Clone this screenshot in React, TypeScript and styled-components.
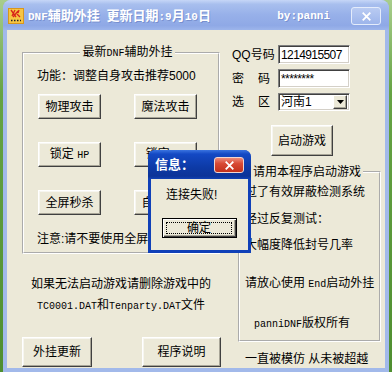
import React from "react"
import styled, { createGlobalStyle } from "styled-components"

const GlobalStyle = createGlobalStyle`
  html, body {
    margin: 0;
    padding: 0;
  }
  body {
    width: 392px;
    height: 372px;
    overflow: hidden;
    background: linear-gradient(180deg, #a8cd8c 0%, #66a344 25%, #4f8e30 100%);
    font-family: "Liberation Sans", "Noto Sans CJK SC", sans-serif;
    font-size: 12px;
    line-height: 14px;
    color: #000;
  }
  * {
    box-sizing: border-box;
  }
`

const Mono = styled.span<{ $size?: number }>`
  font-family: "Liberation Mono", "Noto Sans CJK SC", monospace;
  font-size: ${(p) => p.$size ?? 10}px;
`

const Window = styled.div`
  position: relative;
  margin-left: 3px;
  width: 386px;
  height: 372px;
  display: flex;
  flex-direction: column;
  border-radius: 8px 8px 0 0;
  background: #a2b9ea;
  overflow: hidden;
`

const TitleBar = styled.div`
  height: 30px;
  flex: none;
  display: flex;
  align-items: center;
  padding: 2px 8px 0 5px;
  background: linear-gradient(180deg, #c6d6f7 0%, #a8bfee 14%, #97b0e9 50%, #8fa9e6 85%, #9db5eb 100%);
  color: #fff;
  font-weight: bold;
  font-size: 13px;
  text-shadow: 1px 1px 0 rgba(70, 90, 160, 0.35);
`

const TitleText = styled.span`
  flex: 1;
  margin-left: 4px;
  white-space: nowrap;
`

const Signature = styled.span`
  margin-right: 21px;
  font-family: "Liberation Mono", monospace;
  font-size: 11px;
`

const TitleClose = styled.div`
  width: 30px;
  height: 18px;
  display: flex;
  align-items: center;
  justify-content: center;
  border: 1px solid #e4ecfb;
  border-radius: 3px;
  background: linear-gradient(180deg, #b9cbf2, #9db5eb);
`

const Body = styled.div`
  flex: 1;
  min-height: 0;
  margin: 0 4px 4px;
  background: #ece9d8;
  display: grid;
  grid-template-columns: 198px 1fr;
  column-gap: 12px;
  padding: 15px 0 0 15px;
`

const Column = styled.div`
  display: flex;
  flex-direction: column;
  align-items: flex-start;
`

const Group = styled.fieldset<{ $width: number; $pad: string }>`
  margin: 0;
  width: ${(p) => p.$width}px;
  min-width: 0;
  padding: ${(p) => p.$pad};
  border: 2px groove #fff;
`

const Legend = styled.legend<{ $center?: boolean }>`
  padding: 0 2px;
  margin: ${(p) => (p.$center ? "0 auto" : "0 0 0 6px")};
  line-height: 14px;
  white-space: nowrap;
`

const Line = styled.div<{ $top: number; $left?: number }>`
  margin-top: ${(p) => p.$top}px;
  margin-left: ${(p) => p.$left ?? 0}px;
  line-height: 14px;
  white-space: nowrap;
`

const ButtonGrid = styled.div`
  margin: 11px 0 0 1px;
  display: grid;
  grid-template-columns: 63px 63px;
  column-gap: 33px;
  row-gap: 23px;
`

const Button = styled.button<{ $w: number; $h: number }>`
  width: ${(p) => p.$w}px;
  height: ${(p) => p.$h}px;
  padding: 0;
  font: inherit;
  color: #000;
  white-space: nowrap;
  background: #ece9d8;
  border: 1px solid;
  border-color: #fff #404040 #404040 #fff;
  box-shadow: inset -1px -1px #a8a597, inset 1px 1px #f7f6f0;
`

const Hint = styled.div<{ $top: number }>`
  width: 198px;
  margin-top: ${(p) => p.$top}px;
  text-align: center;
  white-space: nowrap;
`

const BottomRow = styled.div`
  margin-top: 23px;
  display: flex;
  gap: 50px;
`

const FormGrid = styled.div`
  display: grid;
  grid-template-columns: 38px 72px;
  column-gap: 8px;
  row-gap: 5px;
  align-items: center;
`

const Label = styled.span`
  text-align: justify;
  text-align-last: justify;
  white-space: nowrap;
`

const TextBox = styled.div`
  height: 19px;
  padding: 2px 0 0 2px;
  background: #fff;
  border: 1px solid;
  border-color: #7f7f7f #fff #fff #7f7f7f;
  box-shadow: inset 1px 1px #404040, inset -1px -1px #d4d0c8;
  letter-spacing: -0.6px;
  white-space: nowrap;
  overflow: hidden;
`

const Combo = styled.div`
  height: 18px;
  display: flex;
  align-items: center;
  padding: 0 2px 0 2px;
  background: #fff;
  border: 1px solid;
  border-color: #7f7f7f #fff #fff #7f7f7f;
  box-shadow: inset 1px 1px #404040, inset -1px -1px #d4d0c8;
`

const ComboText = styled.span`
  flex: 1;
  white-space: nowrap;
`

const DropButton = styled.span`
  width: 14px;
  height: 14px;
  display: flex;
  align-items: center;
  justify-content: center;
  background: #ece9d8;
  border: 1px solid;
  border-color: #fff #404040 #404040 #fff;
  box-shadow: inset -1px -1px #a8a597;
`

const LaunchButton = styled(Button)`
  margin: 14px 0 0 39px;
`

const Tagline = styled.div`
  margin: 10px 0 0 13px;
  white-space: nowrap;
`

/* message box lying over the main window */
const Dialog = styled.div`
  position: absolute;
  left: 145px;
  top: 150px;
  width: 103px;
  height: 103px;
  display: flex;
  flex-direction: column;
  border-radius: 7px 7px 0 0;
  background: #1040b8;
  overflow: hidden;
`

const DialogTitle = styled.div`
  height: 29px;
  flex: none;
  display: flex;
  align-items: center;
  padding: 1px 7px 0 7px;
  background: linear-gradient(180deg, #3a74e0 0%, #1449c4 14%, #0d3aa6 60%, #0c3398 90%, #1242b4 100%);
  color: #fff;
  font-weight: bold;
  font-size: 13px;
`

const DialogCaption = styled.span`
  flex: 1;
  white-space: nowrap;
`

const RedClose = styled.div`
  width: 30px;
  height: 16px;
  display: flex;
  align-items: center;
  justify-content: center;
  border: 1px solid #f2d6d0;
  border-radius: 3px;
  background: linear-gradient(180deg, #ec8a7a 0%, #d84a35 40%, #c3301b 100%);
`

const DialogBody = styled.div`
  flex: 1;
  margin: 0 3px 3px;
  background: #ece9d8;
  padding: 9px 0 0 15px;
`

const DefaultButton = styled.button`
  width: 75px;
  height: 20px;
  margin: 16px 0 0 -4px;
  padding: 0;
  display: flex;
  font: inherit;
  color: #000;
  background: #ece9d8;
  border: 1px solid #000;
  box-shadow: inset 1px 1px #fff, inset -1px -1px #404040, inset -2px -2px #a8a597;
`

const FocusRing = styled.span`
  flex: 1;
  margin: 3px 4px 3px 3px;
  border: 1px dotted #000;
  display: flex;
  align-items: center;
  justify-content: center;
  line-height: 12px;
`

const AppIcon = () => (
  <svg width="16" height="16" viewBox="0 0 16 16">
    <rect x="0" y="0" width="16" height="16" fill="#f6c543" />
    <rect x="0.5" y="0.5" width="15" height="15" fill="none" stroke="#d8961c" />
    <path d="M3 2 L8 9 M7 2 L4 8 M10 3 L5 9 M9 6 L12 9 M11 2 L10 5" stroke="#d8251b" strokeWidth="1.3" />
    <path d="M3 12.5h1.5M6 12.5h1.5M9 12.5h1.5M12 12.5h1" stroke="#222" strokeWidth="1.5" />
  </svg>
)

const CrossIcon = ({ size }: { size: number }) => (
  <svg width={size} height={size} viewBox="0 0 10 10">
    <path d="M1.5 1.5 L8.5 8.5 M8.5 1.5 L1.5 8.5" stroke="#fff" strokeWidth="2" strokeLinecap="square" />
  </svg>
)

const Arrow = () => (
  <svg width="7" height="4" viewBox="0 0 7 4">
    <path d="M0 0 H7 L3.5 4 Z" fill="#000" />
  </svg>
)

const App = () => {
  return (
    <>
      <GlobalStyle />
      <Window>
        <TitleBar>
          <AppIcon />
          <TitleText>
            <Mono $size={11}>DNF</Mono>辅助外挂<Mono $size={11}> </Mono>更新日期<Mono $size={11}>:9</Mono>月
            <Mono $size={11}>10</Mono>日
          </TitleText>
          <Signature>by:panni</Signature>
          <TitleClose>
            <CrossIcon size={9} />
          </TitleClose>
        </TitleBar>

        <Body>
          <Column>
            <Group $width={198} $pad="0 0 6px 13px">
              <Legend $center>
                最新<Mono>DNF</Mono>辅助外挂
              </Legend>
              <Line $top={8}>功能：调整自身攻击推荐5000</Line>
              <ButtonGrid>
                <Button $w={63} $h={25}>物理攻击</Button>
                <Button $w={63} $h={25}>魔法攻击</Button>
                <Button $w={63} $h={25}>
                  锁定 <Mono>HP</Mono>
                </Button>
                <Button $w={63} $h={25}>
                  锁定 <Mono>MP</Mono>
                </Button>
                <Button $w={63} $h={25}>全屏秒杀</Button>
                <Button $w={63} $h={25}>自动捡物</Button>
              </ButtonGrid>
              <Line $top={17}>注意:请不要使用全屏秒杀</Line>
            </Group>
            <Hint $top={23}>如果无法启动游戏请删除游戏中的</Hint>
            <Hint $top={7}>
              <Mono>TC0001.DAT</Mono>和<Mono>Tenparty.DAT</Mono>文件
            </Hint>
            <BottomRow>
              <Button $w={70} $h={30}>外挂更新</Button>
              <Button $w={79} $h={30}>程序说明</Button>
            </BottomRow>
          </Column>

          <Column>
            <FormGrid>
              <Label>QQ号码</Label>
              <TextBox>1214915507</TextBox>
              <Label>密 码</Label>
              <TextBox>********</TextBox>
              <Label>选 区</Label>
              <Combo>
                <ComboText>河南1</ComboText>
                <DropButton>
                  <Arrow />
                </DropButton>
              </Combo>
            </FormGrid>
            <LaunchButton $w={62} $h={31}>启动游戏</LaunchButton>
            <Group $width={143} $pad="0 0 8px 5px" style={{ marginTop: 9, marginLeft: 6 }}>
              <Legend>请用本程序启动游戏</Legend>
              <Line $top={6}>过了有效屏蔽检测系统</Line>
              <Line $top={13}>经过反复测试：</Line>
              <Line $top={12}>大幅度降低封号几率</Line>
              <Line $top={24}>
                请放心使用 <Mono>End</Mono>启动外挂
              </Line>
              <Line $top={24} $left={9}>
                <Mono>panniDNF</Mono>版权所有
              </Line>
            </Group>
            <Tagline>一直被模仿 从未被超越</Tagline>
          </Column>
        </Body>

        <Dialog>
          <DialogTitle>
            <DialogCaption>信息：</DialogCaption>
            <RedClose>
              <CrossIcon size={9} />
            </RedClose>
          </DialogTitle>
          <DialogBody>
            <div>连接失败!</div>
            <DefaultButton>
              <FocusRing>确定</FocusRing>
            </DefaultButton>
          </DialogBody>
        </Dialog>
      </Window>
    </>
  )
}

export default App
